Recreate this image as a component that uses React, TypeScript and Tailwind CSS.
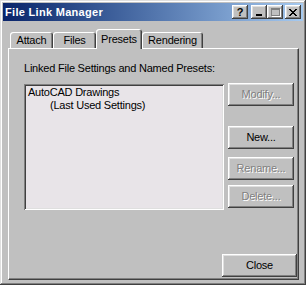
const FONT = "font-['Liberation_Sans',Arial,sans-serif]"

const RAISED =
  'shadow-[inset_-1px_-1px_#404040,inset_1px_1px_#ffffff,inset_-2px_-2px_#808080,inset_2px_2px_#dfdfdf]'

function Button({ label, disabled, className }: { label: string; disabled?: boolean; className: string }) {
  return (
    <div
      className={`flex items-center justify-center bg-[#c0c0c0] text-[11px] leading-[13px] ${RAISED} ${
        disabled ? 'text-[#808080] [text-shadow:1px_1px_0_#ffffff]' : 'text-black'
      } ${className}`}
    >
      {label}
    </div>
  )
}

function CaptionButton({ children, className = '' }: { children: React.ReactNode; className?: string }) {
  return (
    <div className={`flex h-[14px] w-[16px] items-center justify-center bg-[#c0c0c0] ${RAISED} ${className}`}>
      {children}
    </div>
  )
}

const TABS = [
  { label: 'Attach', w: 'w-[43px]' },
  { label: 'Files', w: 'w-[43px]' },
  { label: 'Presets', w: 'w-[46px]', active: true },
  { label: 'Rendering', w: 'w-[61px]' },
]

export default function App() {
  return (
    <div
      className={`${FONT} flex h-[285px] w-[306px] flex-col bg-[#c0c0c0] p-[3px] text-[11px] leading-[13px] tracking-[-0.22px] shadow-[inset_-1px_-1px_#404040,inset_1px_1px_#dfdfdf,inset_-2px_-2px_#808080,inset_2px_2px_#ffffff]`}
    >
      {/* title bar */}
      <div className="flex h-[18px] shrink-0 items-center bg-gradient-to-r from-[#0a246a] to-[#a6caf0] pl-[2px] pr-[2px]">
        <span className="text-[11px] font-bold tracking-[0.3px] text-white">File Link Manager</span>
        <div className="flex-1" />
        <CaptionButton>
          <span className="text-[11px] leading-none font-bold text-black">?</span>
        </CaptionButton>
        <CaptionButton className="ml-[3px]">
          <div className="mt-[6px] ml-[-1px] h-[2px] w-[6px] bg-black" />
        </CaptionButton>
        <CaptionButton>
          <div className="h-[8px] w-[9px] border border-t-2 border-[#808080] shadow-[1px_1px_0_#ffffff]" />
        </CaptionButton>
        <CaptionButton className="ml-[2px]">
          <svg width="8" height="7" viewBox="0 0 8 7" shapeRendering="crispEdges">
            <path d="M0 0h2v1H0zM6 0h2v1H6zM1 1h2v1H1zM5 1h2v1H5zM2 2h4v1H2zM3 3h2v1H3zM2 4h4v1H2zM1 5h2v1H1zM5 5h2v1H5zM0 6h2v1H0zM6 6h2v1H6z" fill="#000" />
          </svg>
        </CaptionButton>
      </div>

      {/* tabs */}
      <div className="ml-[7px] mt-[8px] flex h-[19px] shrink-0 items-end">
        {TABS.map((t) => (
          <div
            key={t.label}
            className={`relative flex items-center justify-center rounded-t-[3px] bg-[#c0c0c0] text-black shadow-[inset_1px_1px_#ffffff,inset_-1px_0_#404040,inset_-2px_0_#808080] ${t.w} ${
              t.active ? 'z-10 mb-[-1px] h-[20px] pt-[1px]' : 'h-[16px]'
            }`}
          >
            {t.label}
          </div>
        ))}
      </div>

      {/* tab page */}
      <div className="mb-[2px] ml-[5px] mr-[4px] flex flex-1 flex-col border-b border-l border-r border-t border-white border-b-[#404040] border-r-[#404040] pl-[15px] pt-[13px] shadow-[inset_-1px_-1px_#808080]">
        <div className="text-black">Linked File Settings and Named Presets:</div>
        <div className="mt-[9px] flex items-start">
          <div className="h-[126px] w-[200px] bg-[#e8e4e8] p-[2px] text-black shadow-[inset_1px_1px_#808080,inset_-1px_-1px_#ffffff,inset_2px_2px_#404040,inset_-2px_-2px_#dfdfdf]">
            <div className="pl-[2px]">AutoCAD Drawings</div>
            <div className="pl-[24px]">(Last Used Settings)</div>
          </div>
          <div className="ml-[4px] mt-[-1px] flex flex-col">
            <Button label="Modify..." disabled className="h-[23px] w-[66px]" />
            <Button label="New..." className="mt-[20px] h-[23px] w-[66px]" />
            <Button label="Rename..." disabled className="mt-[8px] h-[23px] w-[66px]" />
            <Button label="Delete..." disabled className="mt-[5px] h-[23px] w-[66px]" />
          </div>
        </div>
        <Button label="Close" className="mr-[1px] mt-[44px] h-[23px] w-[75px] self-end" />
      </div>
    </div>
  )
}
